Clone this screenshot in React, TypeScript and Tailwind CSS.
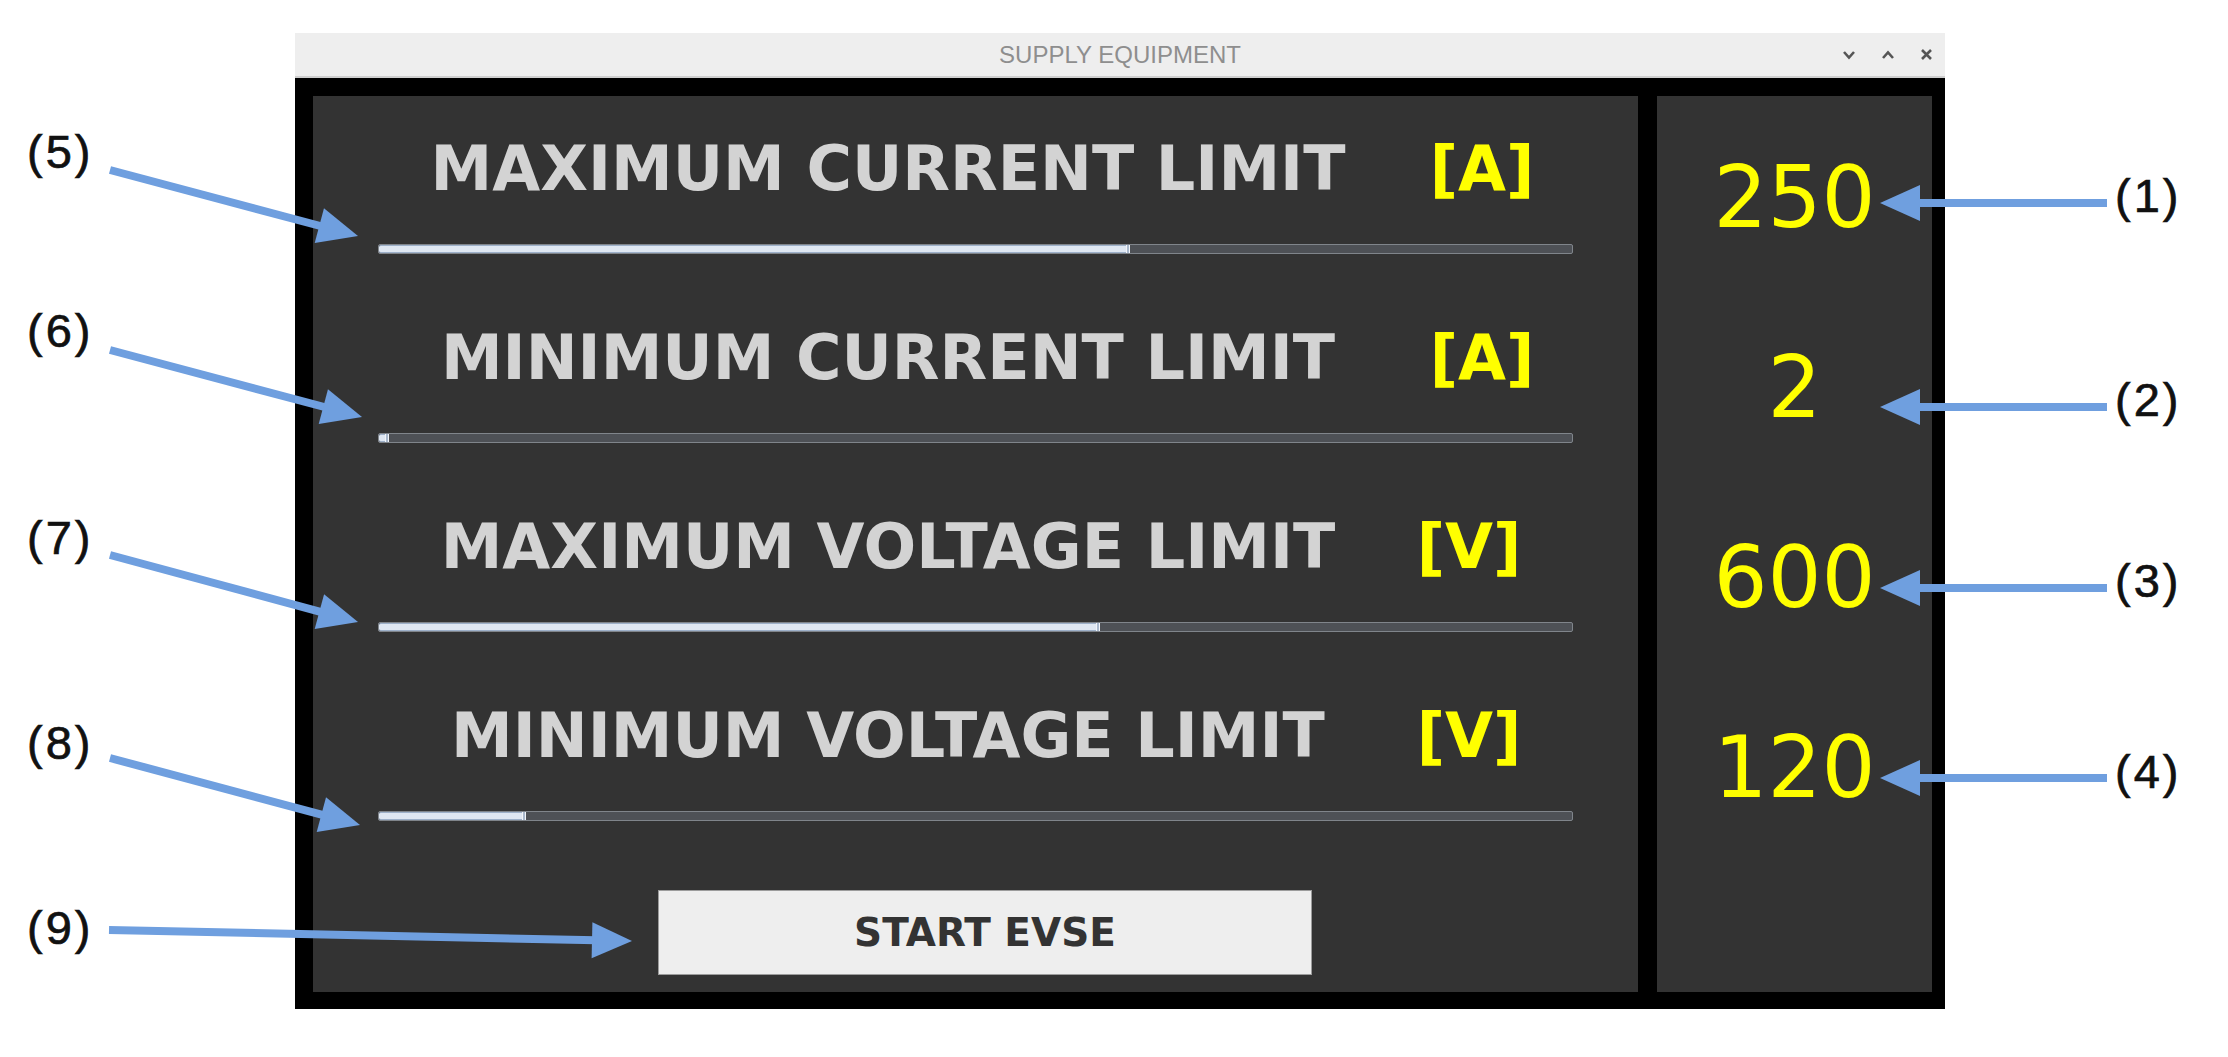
import React from 'react';

type Limit = {
  label: string;
  unit: string;
  value: number;
  max: number;
  unitClass: string;
};

const limits: Limit[] = [
  { label: 'MAXIMUM CURRENT LIMIT', unit: '[A]', value: 250, max: 400, unitClass: 'pr-0' },
  { label: 'MINIMUM CURRENT LIMIT', unit: '[A]', value: 2, max: 400, unitClass: 'pr-0' },
  { label: 'MAXIMUM VOLTAGE LIMIT', unit: '[V]', value: 600, max: 1000, unitClass: 'pr-[26px]' },
  { label: 'MINIMUM VOLTAGE LIMIT', unit: '[V]', value: 120, max: 1000, unitClass: 'pr-[26px]' },
];

const TRACK = 1195;

// callout arrows drawn over the screenshot: [x1, y1, x2 (tip), y2 (tip)]
const arrows: [number, number, number, number][] = [
  [110, 170, 358, 236],
  [110, 350, 362, 417],
  [110, 555, 358, 622],
  [110, 758, 360, 825],
  [109, 930, 632, 941],
  [2107, 203, 1880, 203],
  [2107, 407, 1880, 407],
  [2107, 588, 1880, 588],
  [2107, 778, 1880, 778],
];

const callouts = [
  { text: '(5)', cls: 'left-[27px] top-[128px]' },
  { text: '(6)', cls: 'left-[27px] top-[307px]' },
  { text: '(7)', cls: 'left-[27px] top-[514px]' },
  { text: '(8)', cls: 'left-[27px] top-[719px]' },
  { text: '(9)', cls: 'left-[27px] top-[904px]' },
  { text: '(1)', cls: 'left-[2115px] top-[172px]' },
  { text: '(2)', cls: 'left-[2115px] top-[376px]' },
  { text: '(3)', cls: 'left-[2115px] top-[557px]' },
  { text: '(4)', cls: 'left-[2115px] top-[748px]' },
];

function Arrow({ a }: { a: [number, number, number, number] }) {
  const [x1, y1, x2, y2] = a;
  const dx = x2 - x1;
  const dy = y2 - y1;
  const len = Math.hypot(dx, dy);
  const ux = dx / len;
  const uy = dy / len;
  const head = 40;
  const hw = 18;
  const bx = x2 - ux * head;
  const by = y2 - uy * head;
  const px = -uy;
  const py = ux;
  const pts = `${x2},${y2} ${bx + px * hw},${by + py * hw} ${bx - px * hw},${by - py * hw}`;
  return (
    <g>
      <line x1={x1} y1={y1} x2={bx + ux * 4} y2={by + uy * 4} stroke="#6f9fdf" strokeWidth={8} />
      <polygon points={pts} fill="#6f9fdf" />
    </g>
  );
}

function Slider({ value, max }: { value: number; max: number }) {
  const fill = Math.max(4, (value / max) * TRACK);
  return (
    <div className="ml-[65px] flex h-[10px] w-[1195px] rounded-[2px] border border-[#80858b] bg-[#4e5156]">
      <div className="h-full rounded-l-[2px] border-y border-[#9db0c9] bg-[#dfe7f2]" style={{ width: fill }} />
      <div className="h-full w-[4px] border-x border-[#f1f4f9] bg-[#a9b8cc]" />
    </div>
  );
}

export default function App() {
  return (
    <div className="relative h-[1057px] w-[2228px] overflow-hidden bg-white pl-[295px] pt-[33px]">
      {/* window */}
      <div className="flex w-[1650px] flex-col">
        <div className="grid h-[45px] grid-cols-[1fr_auto_1fr] items-center border-b-2 border-[#cfcfcf] bg-[#eeeeee]">
          <div />
          <span className="font-['Liberation_Sans',Arial,sans-serif] text-[24px] leading-none text-[#8e8e8e]">
            SUPPLY EQUIPMENT
          </span>
          <div className="flex items-center justify-end gap-[25px] pr-[12px]">
            <svg width="14" height="10" viewBox="0 0 14 10">
              <path d="M2 2 L7 7.5 L12 2" fill="none" stroke="#555" strokeWidth="2.6" />
            </svg>
            <svg width="14" height="10" viewBox="0 0 14 10">
              <path d="M2 8 L7 2.5 L12 8" fill="none" stroke="#555" strokeWidth="2.6" />
            </svg>
            <svg width="13" height="13" viewBox="0 0 13 13">
              <path d="M2 2 L11 11 M11 2 L2 11" fill="none" stroke="#555" strokeWidth="2.6" />
            </svg>
          </div>
        </div>

        <div className="flex h-[931px] gap-[19px] bg-black pb-[17px] pl-[18px] pr-[13px] pt-[18px]">
          {/* left panel: limits */}
          <div className="flex w-[1325px] flex-col bg-[#333333] pt-[42px] font-['DejaVu_Sans',sans-serif]">
            {limits.map((l, i) => (
              <div key={l.label} className={i === 0 ? 'flex flex-col' : 'mt-[73px] flex flex-col'}>
                <div className="ml-[47px] flex h-[62px] items-center">
                  <span className="w-[1056px] text-center text-[62px] font-bold leading-none text-[#d3d3d3]">
                    {l.label}
                  </span>
                  <span className={`w-[132px] text-center text-[62px] font-bold leading-none text-[#ffff00] ${l.unitClass}`}>
                    {l.unit}
                  </span>
                </div>
                <div className="mt-[44px]">
                  <Slider value={l.value} max={l.max} />
                </div>
              </div>
            ))}
            <button className="ml-[345px] mt-[69px] flex h-[85px] w-[654px] items-center justify-center border border-[#9c9c9c] bg-[#eeeeee] text-[39px] font-bold leading-none text-[#333333]">
              START EVSE
            </button>
          </div>

          {/* right panel: readouts */}
          <div className="flex flex-1 flex-col bg-[#333333] pt-[6px] font-['DejaVu_Sans',sans-serif]">
            {['250', '2', '600', '120'].map((v) => (
              <div key={v} className="flex h-[190px] items-center justify-center">
                <span className="text-[85px] leading-none text-[#ffff00]">{v}</span>
              </div>
            ))}
          </div>
        </div>
      </div>

      {/* callout annotations */}
      <svg className="pointer-events-none absolute left-0 top-0" width="2228" height="1057">
        {arrows.map((a, i) => (
          <Arrow key={i} a={a} />
        ))}
      </svg>
      {callouts.map((c) => (
        <span
          key={c.text}
          className={`absolute ${c.cls} font-['Liberation_Sans',Arial,sans-serif] text-[47px] leading-none tracking-[3px] text-[#111111] [-webkit-text-stroke:0.7px_#111111]`}
        >
          {c.text}
        </span>
      ))}
    </div>
  );
}
